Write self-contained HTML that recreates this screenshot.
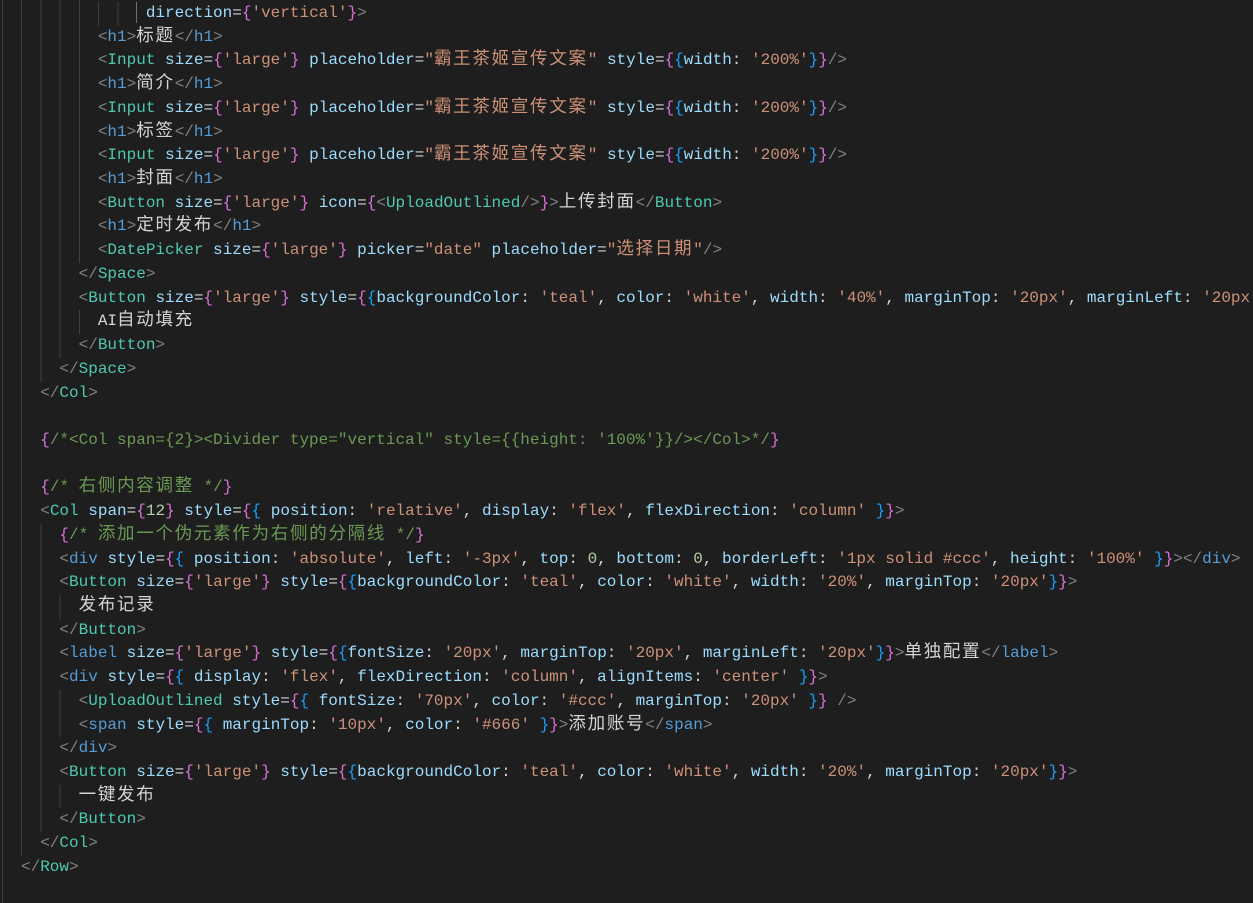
<!DOCTYPE html>
<html><head><meta charset="utf-8"><style>
html,body{margin:0;padding:0;background:#1e1e1e;width:1253px;height:884px;overflow:hidden}
#ed{position:absolute;left:0;top:2px;width:1253px;font-family:"Liberation Mono","Noto Sans CJK SC",monospace;font-size:16px;color:#d4d4d4}
.l{height:23.72px;line-height:23.72px;white-space:pre;padding-left:1.8px;overflow:hidden;
background-image:repeating-linear-gradient(to right,#404040 0 1px,transparent 1px 19.22px);
background-repeat:no-repeat;background-position:2px 0;background-size:var(--w) 100%}
.p{color:#808080}.t{color:#4ec9b0}.h{color:#569cd6}.a{color:#9cdcfe}.s{color:#ce9178}
.o{color:#da70d6}.b{color:#179fff}.c{color:#6a9955}.n{color:#b5cea8}
.j{font-size:17.5px;letter-spacing:1.72px}
.g{position:absolute;left:136px;top:0;width:1px;height:21px;background:#707070}
</style></head><body><div id="ed">
<div class="g"></div>
<div class="l" style="--w:95px;margin-top:-23.72px">          <span class="o">}</span></div>
<div class="l" style="--w:130px">               <span class="a">direction</span>=<span class="o">{</span><span class="s">'vertical'</span><span class="o">}</span><span class="p">&gt;</span></div>
<div class="l" style="--w:95px">          <span class="p">&lt;</span><span class="h">h1</span><span class="p">&gt;</span><span class="j">标题</span><span class="p">&lt;/</span><span class="h">h1</span><span class="p">&gt;</span></div>
<div class="l" style="--w:95px">          <span class="p">&lt;</span><span class="t">Input</span> <span class="a">size</span>=<span class="o">{</span><span class="s">'large'</span><span class="o">}</span> <span class="a">placeholder</span>=<span class="s">"<span class="j">霸王茶姬宣传文案</span>"</span> <span class="a">style</span>=<span class="o">{</span><span class="b">{</span><span class="a">width</span>: <span class="s">'200%'</span><span class="b">}</span><span class="o">}</span><span class="p">/&gt;</span></div>
<div class="l" style="--w:95px">          <span class="p">&lt;</span><span class="h">h1</span><span class="p">&gt;</span><span class="j">简介</span><span class="p">&lt;/</span><span class="h">h1</span><span class="p">&gt;</span></div>
<div class="l" style="--w:95px">          <span class="p">&lt;</span><span class="t">Input</span> <span class="a">size</span>=<span class="o">{</span><span class="s">'large'</span><span class="o">}</span> <span class="a">placeholder</span>=<span class="s">"<span class="j">霸王茶姬宣传文案</span>"</span> <span class="a">style</span>=<span class="o">{</span><span class="b">{</span><span class="a">width</span>: <span class="s">'200%'</span><span class="b">}</span><span class="o">}</span><span class="p">/&gt;</span></div>
<div class="l" style="--w:95px">          <span class="p">&lt;</span><span class="h">h1</span><span class="p">&gt;</span><span class="j">标签</span><span class="p">&lt;/</span><span class="h">h1</span><span class="p">&gt;</span></div>
<div class="l" style="--w:95px">          <span class="p">&lt;</span><span class="t">Input</span> <span class="a">size</span>=<span class="o">{</span><span class="s">'large'</span><span class="o">}</span> <span class="a">placeholder</span>=<span class="s">"<span class="j">霸王茶姬宣传文案</span>"</span> <span class="a">style</span>=<span class="o">{</span><span class="b">{</span><span class="a">width</span>: <span class="s">'200%'</span><span class="b">}</span><span class="o">}</span><span class="p">/&gt;</span></div>
<div class="l" style="--w:95px">          <span class="p">&lt;</span><span class="h">h1</span><span class="p">&gt;</span><span class="j">封面</span><span class="p">&lt;/</span><span class="h">h1</span><span class="p">&gt;</span></div>
<div class="l" style="--w:95px">          <span class="p">&lt;</span><span class="t">Button</span> <span class="a">size</span>=<span class="o">{</span><span class="s">'large'</span><span class="o">}</span> <span class="a">icon</span>=<span class="o">{</span><span class="p">&lt;</span><span class="t">UploadOutlined</span><span class="p">/&gt;</span><span class="o">}</span><span class="p">&gt;</span><span class="j">上传封面</span><span class="p">&lt;/</span><span class="t">Button</span><span class="p">&gt;</span></div>
<div class="l" style="--w:95px">          <span class="p">&lt;</span><span class="h">h1</span><span class="p">&gt;</span><span class="j">定时发布</span><span class="p">&lt;/</span><span class="h">h1</span><span class="p">&gt;</span></div>
<div class="l" style="--w:95px">          <span class="p">&lt;</span><span class="t">DatePicker</span> <span class="a">size</span>=<span class="o">{</span><span class="s">'large'</span><span class="o">}</span> <span class="a">picker</span>=<span class="s">"date"</span> <span class="a">placeholder</span>=<span class="s">"<span class="j">选择日期</span>"</span><span class="p">/&gt;</span></div>
<div class="l" style="--w:76px">        <span class="p">&lt;/</span><span class="t">Space</span><span class="p">&gt;</span></div>
<div class="l" style="--w:76px">        <span class="p">&lt;</span><span class="t">Button</span> <span class="a">size</span>=<span class="o">{</span><span class="s">'large'</span><span class="o">}</span> <span class="a">style</span>=<span class="o">{</span><span class="b">{</span><span class="a">backgroundColor</span>: <span class="s">'teal'</span>, <span class="a">color</span>: <span class="s">'white'</span>, <span class="a">width</span>: <span class="s">'40%'</span>, <span class="a">marginTop</span>: <span class="s">'20px'</span>, <span class="a">marginLeft</span>: <span class="s">'20px'</span><span class="b">}</span><span class="o">}</span><span class="p">&gt;</span></div>
<div class="l" style="--w:95px">          AI<span class="j">自动填充</span></div>
<div class="l" style="--w:76px">        <span class="p">&lt;/</span><span class="t">Button</span><span class="p">&gt;</span></div>
<div class="l" style="--w:57px">      <span class="p">&lt;/</span><span class="t">Space</span><span class="p">&gt;</span></div>
<div class="l" style="--w:37px">    <span class="p">&lt;/</span><span class="t">Col</span><span class="p">&gt;</span></div>
<div class="l" style="--w:37px"> </div>
<div class="l" style="--w:37px">    <span class="o">{</span><span class="c">/*&lt;Col span={2}&gt;&lt;Divider type="vertical" style={{height: '100%'}}/&gt;&lt;/Col&gt;*/</span><span class="o">}</span></div>
<div class="l" style="--w:37px"> </div>
<div class="l" style="--w:37px">    <span class="o">{</span><span class="c">/* <span class="j">右侧内容调整</span> */</span><span class="o">}</span></div>
<div class="l" style="--w:37px">    <span class="p">&lt;</span><span class="t">Col</span> <span class="a">span</span>=<span class="o">{</span><span class="n">12</span><span class="o">}</span> <span class="a">style</span>=<span class="o">{</span><span class="b">{</span> <span class="a">position</span>: <span class="s">'relative'</span>, <span class="a">display</span>: <span class="s">'flex'</span>, <span class="a">flexDirection</span>: <span class="s">'column'</span> <span class="b">}</span><span class="o">}</span><span class="p">&gt;</span></div>
<div class="l" style="--w:57px">      <span class="o">{</span><span class="c">/* <span class="j">添加一个伪元素作为右侧的分隔线</span> */</span><span class="o">}</span></div>
<div class="l" style="--w:57px">      <span class="p">&lt;</span><span class="h">div</span> <span class="a">style</span>=<span class="o">{</span><span class="b">{</span> <span class="a">position</span>: <span class="s">'absolute'</span>, <span class="a">left</span>: <span class="s">'-3px'</span>, <span class="a">top</span>: <span class="n">0</span>, <span class="a">bottom</span>: <span class="n">0</span>, <span class="a">borderLeft</span>: <span class="s">'1px solid #ccc'</span>, <span class="a">height</span>: <span class="s">'100%'</span> <span class="b">}</span><span class="o">}</span><span class="p">&gt;&lt;/</span><span class="h">div</span><span class="p">&gt;</span></div>
<div class="l" style="--w:57px">      <span class="p">&lt;</span><span class="t">Button</span> <span class="a">size</span>=<span class="o">{</span><span class="s">'large'</span><span class="o">}</span> <span class="a">style</span>=<span class="o">{</span><span class="b">{</span><span class="a">backgroundColor</span>: <span class="s">'teal'</span>, <span class="a">color</span>: <span class="s">'white'</span>, <span class="a">width</span>: <span class="s">'20%'</span>, <span class="a">marginTop</span>: <span class="s">'20px'</span><span class="b">}</span><span class="o">}</span><span class="p">&gt;</span></div>
<div class="l" style="--w:76px">        <span class="j">发布记录</span></div>
<div class="l" style="--w:57px">      <span class="p">&lt;/</span><span class="t">Button</span><span class="p">&gt;</span></div>
<div class="l" style="--w:57px">      <span class="p">&lt;</span><span class="h">label</span> <span class="a">size</span>=<span class="o">{</span><span class="s">'large'</span><span class="o">}</span> <span class="a">style</span>=<span class="o">{</span><span class="b">{</span><span class="a">fontSize</span>: <span class="s">'20px'</span>, <span class="a">marginTop</span>: <span class="s">'20px'</span>, <span class="a">marginLeft</span>: <span class="s">'20px'</span><span class="b">}</span><span class="o">}</span><span class="p">&gt;</span><span class="j">单独配置</span><span class="p">&lt;/</span><span class="h">label</span><span class="p">&gt;</span></div>
<div class="l" style="--w:57px">      <span class="p">&lt;</span><span class="h">div</span> <span class="a">style</span>=<span class="o">{</span><span class="b">{</span> <span class="a">display</span>: <span class="s">'flex'</span>, <span class="a">flexDirection</span>: <span class="s">'column'</span>, <span class="a">alignItems</span>: <span class="s">'center'</span> <span class="b">}</span><span class="o">}</span><span class="p">&gt;</span></div>
<div class="l" style="--w:76px">        <span class="p">&lt;</span><span class="t">UploadOutlined</span> <span class="a">style</span>=<span class="o">{</span><span class="b">{</span> <span class="a">fontSize</span>: <span class="s">'70px'</span>, <span class="a">color</span>: <span class="s">'#ccc'</span>, <span class="a">marginTop</span>: <span class="s">'20px'</span> <span class="b">}</span><span class="o">}</span> <span class="p">/&gt;</span></div>
<div class="l" style="--w:76px">        <span class="p">&lt;</span><span class="h">span</span> <span class="a">style</span>=<span class="o">{</span><span class="b">{</span> <span class="a">marginTop</span>: <span class="s">'10px'</span>, <span class="a">color</span>: <span class="s">'#666'</span> <span class="b">}</span><span class="o">}</span><span class="p">&gt;</span><span class="j">添加账号</span><span class="p">&lt;/</span><span class="h">span</span><span class="p">&gt;</span></div>
<div class="l" style="--w:57px">      <span class="p">&lt;/</span><span class="h">div</span><span class="p">&gt;</span></div>
<div class="l" style="--w:57px">      <span class="p">&lt;</span><span class="t">Button</span> <span class="a">size</span>=<span class="o">{</span><span class="s">'large'</span><span class="o">}</span> <span class="a">style</span>=<span class="o">{</span><span class="b">{</span><span class="a">backgroundColor</span>: <span class="s">'teal'</span>, <span class="a">color</span>: <span class="s">'white'</span>, <span class="a">width</span>: <span class="s">'20%'</span>, <span class="a">marginTop</span>: <span class="s">'20px'</span><span class="b">}</span><span class="o">}</span><span class="p">&gt;</span></div>
<div class="l" style="--w:76px">        <span class="j">一键发布</span></div>
<div class="l" style="--w:57px">      <span class="p">&lt;/</span><span class="t">Button</span><span class="p">&gt;</span></div>
<div class="l" style="--w:37px">    <span class="p">&lt;/</span><span class="t">Col</span><span class="p">&gt;</span></div>
<div class="l" style="--w:18px">  <span class="p">&lt;/</span><span class="t">Row</span><span class="p">&gt;</span></div>
<div class="l" style="--w:18px"> </div>
</div></body></html>
